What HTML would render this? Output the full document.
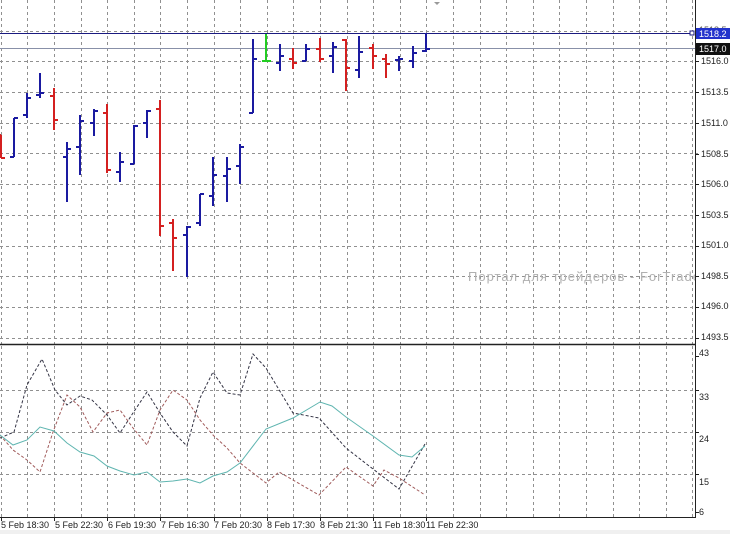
<!DOCTYPE html>
<html><head><meta charset="utf-8"><style>
html,body{margin:0;padding:0;background:#fff;}
svg{display:block;font-family:"Liberation Sans",sans-serif;}
</style></head><body>
<svg id="s" width="730" height="534" viewBox="0 0 730 534" xmlns="http://www.w3.org/2000/svg">
<rect width="730" height="534" fill="#fff"/>
<rect x="0" y="530" width="730" height="4" fill="#f0f0f0"/>
<g id="grid" stroke="#909090" stroke-width="1" stroke-dasharray="3,3" shape-rendering="crispEdges"></g>
<text x="468" y="281" font-size="13" letter-spacing="1" fill="#b0b0b0">Портал для трейдеров - ForTrader.ru</text>
<rect x="696" y="262" width="34" height="30" fill="#fff"/>
<line x1="0" y1="33.5" x2="692" y2="33.5" stroke="#1a1a80" stroke-width="1"/>
<line x1="0" y1="48.5" x2="695" y2="48.5" stroke="#8890a8" stroke-width="1"/>
<rect x="690" y="31" width="4" height="4" fill="#fff" stroke="#1a1a80"/>
<path d="M434 2 L437 5 L440 2 Z" fill="#999"/>
<g id="bars" stroke-width="2" fill="none" shape-rendering="crispEdges"></g>
<g id="ind" fill="none"></g>
<line x1="0" y1="344.5" x2="696" y2="344.5" stroke="#222" stroke-width="1.5"/>
<line x1="695.5" y1="0" x2="695.5" y2="518" stroke="#222" stroke-width="1"/>
<line x1="0" y1="517.5" x2="696" y2="517.5" stroke="#222" stroke-width="1"/>
<g font-size="9" fill="#222" id="ax">
<text x="699" y="33" fill="#555">1518.5</text>
<rect x="696" y="28" width="34" height="11" fill="#2233cc"/>
<text x="699" y="37" fill="#fff">1518.2</text>
<rect x="696" y="43" width="34" height="12" fill="#111"/>
<text x="699" y="52" fill="#fff">1517.0</text>
<text x="701" y="64">1516.0</text>
<text x="701" y="95">1513.5</text>
<text x="701" y="126">1511.0</text>
<text x="701" y="157">1508.5</text>
<text x="701" y="187">1506.0</text>
<text x="701" y="218">1503.5</text>
<text x="701" y="248">1501.0</text>
<text x="701" y="279">1498.5</text>
<text x="701" y="309">1496.0</text>
<text x="701" y="340">1493.5</text>
<text x="699" y="356">43</text>
<text x="699" y="400">33</text>
<text x="699" y="442">24</text>
<text x="699" y="485">15</text>
<text x="699" y="515">6</text>
<text x="1" y="528">5 Feb 18:30</text>
<text x="55" y="528">5 Feb 22:30</text>
<text x="108" y="528">6 Feb 19:30</text>
<text x="161" y="528">7 Feb 16:30</text>
<text x="214" y="528">7 Feb 20:30</text>
<text x="267" y="528">8 Feb 17:30</text>
<text x="320" y="528">8 Feb 21:30</text>
<text x="373" y="528">11 Feb 18:30</text>
<text x="426" y="528">11 Feb 22:30</text>
</g>
<g id="ticks" stroke="#222" shape-rendering="crispEdges"></g>
</svg>
<script>
var NS="http://www.w3.org/2000/svg";
function el(p,t,a){var e=document.createElementNS(NS,t);for(var k in a)e.setAttribute(k,a[k]);p.appendChild(e);return e;}
var g=document.getElementById("grid");
for(var k=0;k<=26;k++){var x=Math.round(0.7+26.6*k)+0.5;if(x>693)break;el(g,"line",{x1:x,y1:0,x2:x,y2:344});el(g,"line",{x1:x,y1:346,x2:x,y2:517});}
for(var k=-1;k<10;k++){var y=Math.round(61.3+30.7*k)+0.5;el(g,"line",{x1:0,y1:y,x2:698,y2:y});}
[390,432,474].forEach(function(y){el(g,"line",{x1:0,y1:y+0.5,x2:698,y2:y+0.5});});
var t=document.getElementById("ticks");
for(var k=0;k<=8;k++){var x=Math.round(0.7+53.2*k)+0.5;el(t,"line",{x1:x,y1:517,x2:x,y2:521});}
[61,92,123,154,184,215,246,276,307,338,356,390,432,474,512].forEach(function(y){el(t,"line",{x1:695,y1:y+.5,x2:699,y2:y+.5});});
var B=[[1,135,158,135,158,"r"],[14,118,157,157,118,"b"],[27,93,118,115,98,"b"],[40,73,98,95,93,"b"],[54,88,130,96,120,"r"],[67,142,202,157,149,"b"],[80,115,175,147,121,"b"],[94,109,136,123,111,"b"],[107,104,173,113,170,"r"],[120,152,182,172,162,"b"],[134,125,164,164,126,"b"],[147,110,138,123,111,"b"],[160,100,236,109,226,"r"],[173,219,271,223,238,"r"],[187,226,277,235,227,"b"],[200,194,226,223,194,"b"],[213,157,206,196,175,"b"],[227,157,202,176,169,"b"],[240,144,184,166,147,"b"],[253,39,113,113,59,"b"],[266,34,62,61,61,"g"],[280,44,71,63,56,"b"],[293,48,69,59,63,"r"],[306,44,61,61,49,"b"],[320,38,62,49,59,"r"],[333,42,73,56,47,"b"],[346,39,91,40,68,"r"],[359,36,78,70,52,"b"],[373,44,69,48,56,"r"],[386,54,78,59,64,"r"],[399,56,71,60,59,"b"],[413,46,68,61,53,"b"],[426,33,52,51,49,"b"]];
var C={r:"#d42020",b:"#1a1aa0",g:"#22cc22"};
var bg=document.getElementById("bars");
B.forEach(function(b){var x=b[0],c=C[b[5]];el(bg,"line",{x1:x,y1:b[1],x2:x,y2:b[2],stroke:c});el(bg,"line",{x1:x-4,y1:b[3],x2:x,y2:b[3],stroke:c});el(bg,"line",{x1:x,y1:b[4],x2:x+(b[5]=="g"?5:4),y2:b[4],stroke:c});});
var ig=document.getElementById("ind");
function pl(pts,c,d){el(ig,"polyline",{points:pts,stroke:c,"stroke-width":1,"stroke-dasharray":d||"none"});}
pl("0,438 14,432 27,385 42,359 55,390 67,405 80,396 92,400 107,415 120,433 133,413 147,392 160,413 173,432 187,446 200,398 213,372 227,393 240,395 253,354 266,368 293,413 319,418 346,448 373,469 399,489 425,444","#333344","3,2");
pl("0,435 13,450 27,460 40,472 53,432 67,395 80,407 93,432 107,413 120,410 133,428 147,445 160,410 173,390 187,400 200,420 213,435 227,448 240,463 253,473 266,483 279,472 293,480 319,495 346,467 373,486 384,470 399,478 425,495","#a05a5a","3,2");
pl("0,435 13,445 27,440 40,427 54,431 67,443 80,452 94,456 107,466 120,471 134,475 147,472 160,482 173,481 187,479 200,483 213,476 227,472 240,463 266,429 293,418 320,402 332,406 346,417 373,436 399,455 412,457 425,446","#5fb5b0");
</script>
</body></html>
